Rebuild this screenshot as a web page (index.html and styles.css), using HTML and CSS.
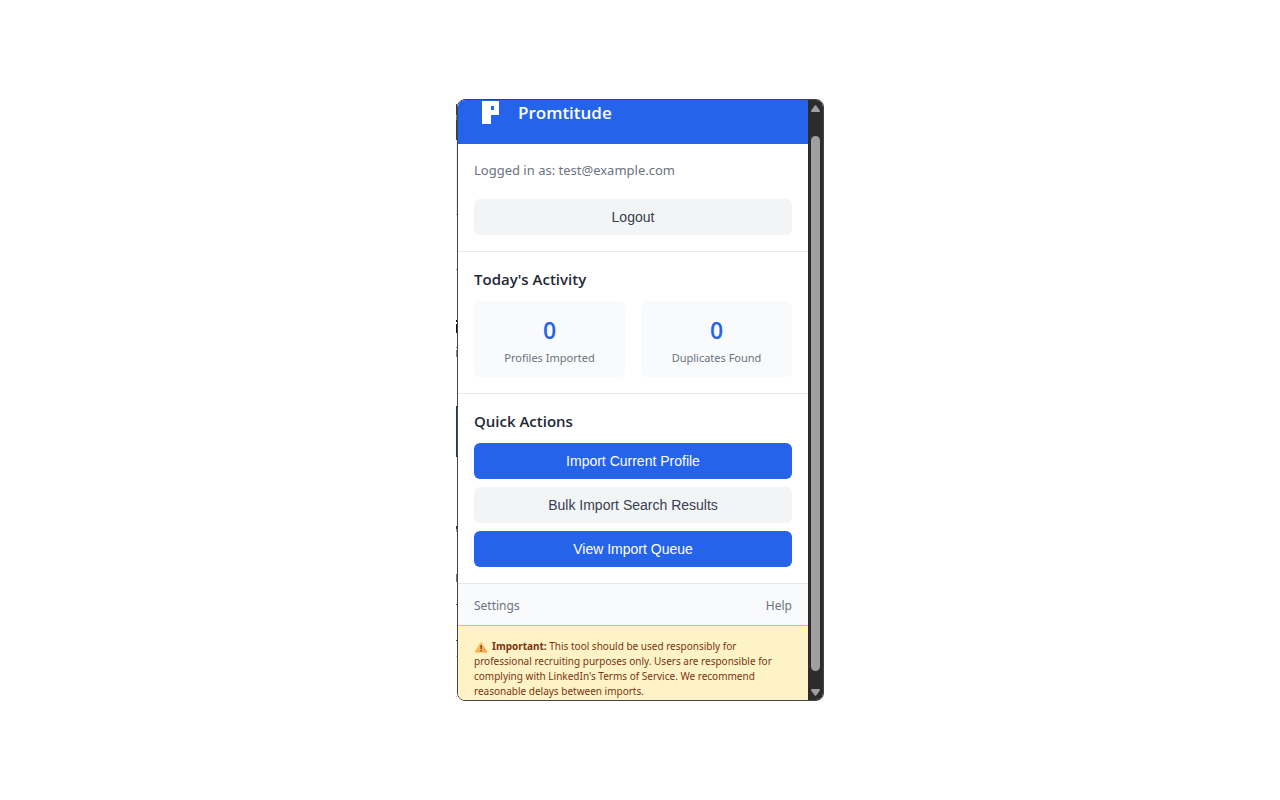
FILE: index.html
```html
<!DOCTYPE html>
<html lang="en">
<head>
  <meta charset="utf-8">
  <meta name="viewport" content="width=device-width, initial-scale=1">
  <title>Promtitude</title>
  <link rel="stylesheet" href="styles.css">
</head>
<body>
  <div class="stage">
    <div class="page-edge"></div>
    <div class="popup">
      <main class="content">
        <header class="header">
          <svg class="logo" viewBox="0 0 32 28" width="32" height="28" aria-hidden="true" shape-rendering="crispEdges">
            <path fill="#fff" fill-rule="evenodd" d="M8 1h17v14h-8v9H8zM17 6v4h3V6z"/>
          </svg>
          <h1 class="brand">Promtitude</h1>
        </header>
        <section class="section">
          <p class="account">Logged in as: test@example.com</p>
          <button class="btn btn-secondary" type="button">Logout</button>
        </section>
        <section class="section">
          <h2 class="title">Today's Activity</h2>
          <div class="stats">
            <div class="stat"><span class="stat-value">0</span><span class="stat-label">Profiles Imported</span></div>
            <div class="stat"><span class="stat-value">0</span><span class="stat-label">Duplicates Found</span></div>
          </div>
        </section>
        <section class="section">
          <h2 class="title">Quick Actions</h2>
          <div class="actions">
            <button class="btn btn-primary" type="button">Import Current Profile</button>
            <button class="btn btn-secondary" type="button">Bulk Import Search Results</button>
            <button class="btn btn-primary" type="button">View Import Queue</button>
          </div>
        </section>
        <footer class="footer">
          <a class="link" href="#settings">Settings</a>
          <a class="link" href="#help">Help</a>
        </footer>
        <p class="notice"><svg class="warning" viewBox="0 0 14 12" width="14" height="12" aria-hidden="true"><defs><linearGradient id="amber" x1="0" y1="0" x2="1" y2="1"><stop offset="0" stop-color="#ffcf70"/><stop offset="1" stop-color="#f59a3c"/></linearGradient></defs><path fill="url(#amber)" d="M6.3 1.6Q7 .6 7.7 1.6L13 10.2Q13.4 11.4 12.3 11.5H1.7Q.6 11.4 1 10.2z"/><path fill="#4a3520" d="M6.5 4h1.2v4H6.5zM6.5 9h1.2v1.2H6.5z"/></svg><strong>Important:</strong> This tool should be used responsibly for professional recruiting purposes only. Users are responsible for complying with LinkedIn's Terms of Service. We recommend reasonable delays between imports.</p>
      </main>
      <div class="scrollbar" aria-hidden="true">
        <svg viewBox="0 0 9 7" width="9" height="7"><path fill="#9f9f9f" d="M3.8.6Q4.5-.3 5.2.6L8.8 5.5Q9.2 7 8 7H1Q-.2 7 .2 5.5z"/></svg>
        <div class="thumb"></div>
        <svg viewBox="0 0 9 7" width="9" height="7"><path fill="#9f9f9f" d="M3.8 6.4Q4.5 7.3 5.2 6.4L8.8 1.5Q9.2 0 8 0H1Q-.2 0 .2 1.5z"/></svg>
      </div>
    </div>
  </div>
</body>
</html>
```

FILE: styles.css
```css
* { box-sizing: border-box; }

body {
  margin: 0;
  min-height: 100vh;
  display: flex;
  align-items: center;
  justify-content: center;
  background: #fff;
  font-family: "Noto Sans", "Open Sans", sans-serif;
  color: #1f2937;
}

h1, h2, p { margin: 0; }

.stage {
  display: flex;
  width: 100%;
  max-width: 368px;
}

/* Sliver of the web page that shows beside the popup */
.page-edge {
  flex: 0 0 1px;
  background: linear-gradient(
    #fff 5px, #3c3c3c 5px 16px, #b58040 16px 18px, #5b7890 18px 21px, #3c3c3c 21px 41px,
    #eee 41px 115px, #bbb 115px 116px, #fff 116px 170px, #999 170px 171px,
    #fff 171px 221px, #111 221px 223px, #fff 223px 225px, #111 225px 234px,
    #fff 234px 248px, #888 248px 249px, #fff 249px 251px, #888 251px 258px,
    #fff 258px 307px, #1e3a70 307px 358px, #fff 358px 427px, #333 427px 430px, #aaa 430px 433px,
    #fff 433px 475px, #777 475px 483px, #fff 483px 505px, #2b5b9b 505px 506px,
    #fff 506px 541px, #2b5b9b 541px 542px, #fff 542px 557px, #ccc 557px 558px, #fff 558px 597px, #bbb 597px 598px, #fff 598px);
}

.popup {
  flex: 1;
  display: flex;
  overflow: hidden;
  border: 1px solid #454545;
  border-radius: 8px;
  background: #fff;
}

.content { flex: 1; min-width: 0; }

.header {
  display: flex;
  gap: 12px;
  padding: 0 16px 16px;
  background: #2563eb;
  color: #fff;
}

.logo { display: block; }

.brand,
.title,
.stat-value {
  font-family: "Open Sans", "Noto Sans", sans-serif;
  font-weight: 600;
}

.brand {
  font-size: 17px;
  line-height: 26px;
}

.section {
  padding: 16px;
  border-bottom: 1px solid #e5e7eb;
}

.account {
  margin-bottom: 18px;
  font-size: 13px;
  line-height: 21px;
  color: #6b7280;
}

.btn {
  display: block;
  width: 100%;
  padding: 10px 16px;
  border: 0;
  border-radius: 6px;
  font: 14px/16px "Liberation Sans", Arial, sans-serif;
}

.btn-primary { background: #2563eb; color: #fff; }
.btn-secondary { background: #f3f4f6; color: #374151; }

.title {
  margin-bottom: 11px;
  font-size: 15px;
  line-height: 22px;
}

.stats {
  display: grid;
  grid-template-columns: 1fr 1fr;
  gap: 16px;
}

.stat {
  display: flex;
  flex-direction: column;
  gap: 4px;
  padding: 13px 12px 11px;
  border-radius: 6px;
  background: #f9fafb;
  text-align: center;
}

.stat-value {
  font-size: 23px;
  line-height: 32px;
  color: #2563eb;
}

.stat-label {
  font-size: 11px;
  line-height: 16px;
  color: #6b7280;
  white-space: nowrap;
}

.actions { display: grid; gap: 8px; }

.footer {
  display: flex;
  justify-content: space-between;
  padding: 13px 16px 11px;
  background: #f9fafb;
}

.link {
  font-size: 12px;
  line-height: 17px;
  color: #6b7280;
  text-decoration: none;
}

.notice {
  padding: 13px 16px 1px;
  border-top: 1px solid #fbbf24;
  background: #fef3c7;
  font-size: 10px;
  line-height: 15px;
  color: #78350f;
}

.warning {
  margin-right: 4px;
  vertical-align: -3px;
}

.scrollbar {
  flex: 0 0 15px;
  display: flex;
  flex-direction: column;
  align-items: center;
  padding: 5px 0 4px;
  background: #2c2c2c;
}

.thumb {
  flex: 1;
  width: 9px;
  margin: 24px 0 18px;
  border-radius: 5px;
  background: #9f9f9f;
}
```
